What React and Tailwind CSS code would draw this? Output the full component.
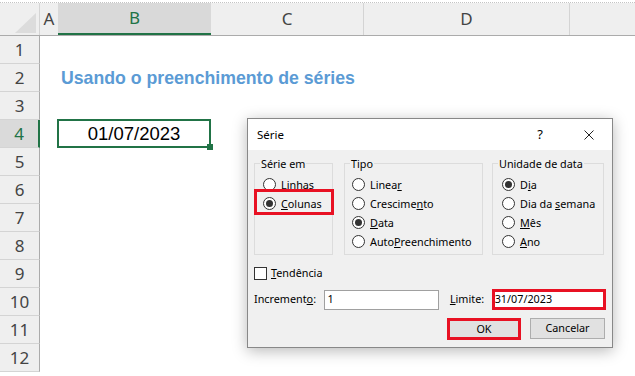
import React from 'react';

const ui = { fontFamily: '"Noto Sans", "Open Sans", sans-serif' };
const xl = { fontFamily: '"Liberation Sans", Arial, sans-serif' };

const Radio = ({ checked, children }) => (
  <div className="flex items-center h-[19px]">
    <span className="w-[13px] h-[13px] shrink-0 rounded-full border border-[#333] bg-white flex items-center justify-center">
      {checked && <span className="w-[7px] h-[7px] rounded-full bg-[#333]" />}
    </span>
    <span className="ml-[5px] leading-[14px] whitespace-nowrap">{children}</span>
  </div>
);

const Group = ({ title, className, pad, children }) => (
  <div className={`relative border border-[#dcdcdc] h-[92px] ${className}`}>
    <span className="absolute top-[-7px] left-[5px] px-[1px] bg-[#f0f0f0] leading-[14px] whitespace-nowrap">{title}</span>
    <div className={`pt-[11px] ${pad}`}>{children}</div>
  </div>
);

const rows = [1, 2, 3, 4, 5, 6, 7, 8, 9, 10, 11, 12];

export default function App() {
  return (
    <div className="relative w-[635px] h-[376px] overflow-hidden bg-white">
      {/* top strip */}
      <div className="h-[3px] border-b border-dotted border-[#c4c4c4]" />

      {/* column headers */}
      <div className="flex h-[33px] bg-[#efefef] border-b border-[#ababab] text-[17px] text-[#444]" style={ui}>
        <div className="w-[40px] border-r border-[#d4d4d4] flex items-end justify-end pr-[3px] pb-[2px]">
          <svg width="21" height="20" viewBox="0 0 21 20">
            <polygon points="21,0 21,20 0,20" fill="#dcdcdc" />
          </svg>
        </div>
        <div className="w-[18px] flex items-center justify-center">A</div>
        <div className="w-[153px] bg-[#d9d9d9] border-b-2 border-[#217346] flex items-center justify-center text-[#217346]">B</div>
        <div className="w-[153px] border-r border-[#d4d4d4] flex items-center justify-center">C</div>
        <div className="w-[206px] border-r border-[#d4d4d4] flex items-center justify-center">D</div>
        <div className="flex-1" />
      </div>

      {/* grid rows */}
      {rows.map((n) => (
        <div key={n} className="flex h-[28px]">
          <div
            className={`w-[40px] shrink-0 border-b border-[#d4d4d4] flex items-center justify-center text-[17px] ${
              n === 4 ? 'bg-[#dadada] border-r-2 border-r-[#217346] text-[#217346]' : 'bg-[#efefef] border-r border-r-[#ababab] text-[#444]'
            }`}
            style={ui}
          >
            {n}
          </div>
          <div className="flex-1 flex items-center">
            {n === 2 && (
              <span className="ml-[21px] text-[17.7px] font-bold text-[#5b9bd5]" style={xl}>
                Usando o preenchimento de séries
              </span>
            )}
            {n === 4 && (
              <div className="relative z-10 ml-[17px] w-[154px] h-[29px] -mt-px border-2 border-[#217346] flex items-center justify-center text-[18.5px] text-black" style={xl}>
                01/07/2023
                <span className="absolute right-[-4px] bottom-[-4px] w-[6px] h-[6px] bg-[#217346]" />
              </div>
            )}
          </div>
        </div>
      ))}

      {/* Série dialog */}
      <div
        className="absolute left-[247px] top-[118px] w-[366px] h-[230px] border border-[#888] bg-[#f0f0f0] flex flex-col text-[10.8px] text-black shadow-[0_3px_14px_rgba(0,0,0,0.28)]"
        style={ui}
      >
        <div className="h-[31px] bg-white flex items-center pl-[9px] text-[11.5px]">
          <span>Série</span>
          <span className="ml-auto mr-[41px] text-[13px]">?</span>
          <svg className="mr-[18px]" width="10" height="10" viewBox="0 0 10 10">
            <path d="M0.5 0.5L9.5 9.5M9.5 0.5L0.5 9.5" stroke="#222" strokeWidth="1" />
          </svg>
        </div>

        <div className="flex-1 px-[6px]">
          <div className="flex mt-[13px]">
            <Group title="Série em" className="w-[79px]" pad="pl-[8px]">
              <Radio>Lin<u>h</u>as</Radio>
              <Radio checked><u>C</u>olunas</Radio>
              <span className="absolute left-[-1px] top-[25px] w-[80px] h-[26px] border-[3px] border-[#e81123]" />
            </Group>
            <Group title="Tipo" className="ml-[11px] w-[139px]" pad="pl-[7px]">
              <Radio>Linea<u>r</u></Radio>
              <Radio>Crescime<u>n</u>to</Radio>
              <Radio checked><u>D</u>ata</Radio>
              <Radio>Auto<u>P</u>reenchimento</Radio>
            </Group>
            <Group title="Unidade de data" className="ml-[9px] w-[112px]" pad="pl-[9px]">
              <Radio checked>D<u>i</u>a</Radio>
              <Radio>Dia da <u>s</u>emana</Radio>
              <Radio><u>M</u>ês</Radio>
              <Radio><u>A</u>no</Radio>
            </Group>
          </div>

          <div className="flex items-center mt-[12px] h-[13px]">
            <span className="w-[13px] h-[13px] border border-[#333] bg-white" />
            <span className="ml-[4px]"><u>T</u>endência</span>
          </div>

          <div className="flex items-center mt-[9px] h-[21px]">
            <span className="w-[70px]">Increment<u>o</u>:</span>
            <div className="w-[116px] h-[20px] border border-[#a0a0a0] bg-white flex items-center pl-[3px]">1</div>
            <span className="ml-[11px] w-[42px]"><u>L</u>imite:</span>
            <div className="w-[115px] h-[21px] border-[3px] border-[#e81123] bg-white flex items-center">31/07/2023</div>
          </div>

          <div className="flex justify-end mt-[8px] mr-[1px]">
            <div className="w-[74px] h-[22px] border-[3px] border-[#e81123] bg-[#e1e1e1] flex items-center justify-center">OK</div>
            <div className="ml-[9px] w-[75px] h-[21px] border border-[#adadad] bg-[#e1e1e1] flex items-center justify-center">Cancelar</div>
          </div>
        </div>
      </div>
    </div>
  );
}
